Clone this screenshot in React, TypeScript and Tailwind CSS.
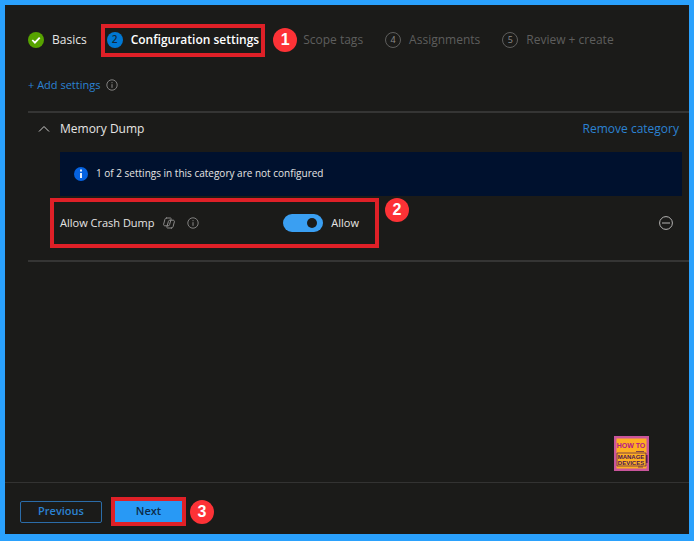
import type { ReactNode } from "react";

function CalloutBadge({ children }: { children: ReactNode }) {
  return (
    <span className="flex size-6 shrink-0 items-center justify-center rounded-full bg-[#fd3236] font-['Liberation_Sans',sans-serif] text-base font-bold text-white">
      {children}
    </span>
  );
}

function InfoIcon() {
  return (
    <svg className="size-3 shrink-0" viewBox="0 0 12 12" fill="none" stroke="#8c8b8a" aria-hidden="true">
      <circle cx="6" cy="6" r="5.2" strokeWidth="0.9" />
      <path d="M6 5.2v3.6M6 3.2v1" strokeWidth="1" />
    </svg>
  );
}

function CopilotIcon() {
  return (
    <svg className="size-3 shrink-0" viewBox="0 0 12 12" fill="none" stroke="#8c8b8a" strokeLinejoin="round" strokeLinecap="round" aria-hidden="true">
      <path d="M3.600 1h3.700c.8 0 1 .5.8 1.200L6.600 7.600c-.2.800-.6 1.200-1.400 1.200H2C.9 8.800.4 8.100.7 7l1.200-4.600C2.100 1.500 2.700 1 3.600 1z" />
      <path d="M8.400 11H4.700c-.8 0-1-.5-.8-1.200l1.500-5.400c.2-.8.6-1.200 1.400-1.200H10c1.100 0 1.600.7 1.300 1.800l-1.200 4.600c-.2.900-.8 1.400-1.700 1.400z" />
    </svg>
  );
}

function SiteLogo() {
  return (
    <svg className="size-[35px]" viewBox="0 0 35 35" role="img" aria-label="How to manage devices">
      <rect width="35" height="35" fill="#c9559b" />
      <rect x="2.500" y="2.500" width="30" height="30" fill="#fdaf22" />
      <g fontFamily="'Liberation Sans', sans-serif" fontWeight="700" textAnchor="middle">
        <text x="17" y="12" fontSize="7" fill="#b5168a">HOW TO</text>
        <text x="17" y="23" fontSize="6" fill="#4a1455">MANAGE</text>
        <text x="17" y="29" fontSize="6" fill="#4a1455">DEVICES</text>
      </g>
      <path d="M22 15.500h8M3 17h29v13H3zM24 31h5" fill="none" stroke="#4a1455" strokeWidth="0.7" />
      <path d="M32.800 19v8" stroke="#4a1455" strokeWidth="1.400" />
    </svg>
  );
}

export default function App() {
  return (
    <div className="flex min-h-screen flex-col border-[5px] border-b-[7px] border-[#2aa1fd] bg-[#1b1b19] font-['Open_Sans','Noto_Sans',sans-serif] text-xs text-[#e6e5e4]">
      <main className="flex flex-1 flex-col pl-[23px]">
        <nav className="mt-3.5 flex h-[42px] items-center">
          <a href="#basics" className="flex items-center gap-2">
            <svg className="size-4" viewBox="0 0 16 16" aria-hidden="true">
              <circle cx="8" cy="8" r="8" fill="#57a300" />
              <path d="M4.300 8l2.600 2.700 4.800-5" fill="none" stroke="#fff" strokeWidth="1.800" />
            </svg>
            Basics
          </a>
          <a href="#configuration" aria-current="step" className="ml-3.5 flex h-[33px] items-center gap-2 border-4 border-[#df2027] px-0.5 font-semibold text-white">
            <span className="flex size-4 items-center justify-center rounded-full bg-[#0078d4] text-[10px] text-[#10283c]">2</span>
            Configuration settings
          </a>
          <span className="ml-2 flex"><CalloutBadge>1</CalloutBadge></span>
          <a href="#scope" className="ml-1.5 text-[#5e5e5d]">Scope tags</a>
          <a href="#assignments" className="ml-[22px] flex items-center gap-2 text-[#5e5e5d]">
            <span className="flex size-4 items-center justify-center rounded-full border border-[#5e5e5d] text-[9px] text-[#8c8c8b]">4</span>
            Assignments
          </a>
          <a href="#review" className="ml-[22px] flex items-center gap-2 text-[#5e5e5d]">
            <span className="flex size-4 items-center justify-center rounded-full border border-[#5e5e5d] text-[9px] text-[#8c8c8b]">5</span>
            Review + create
          </a>
        </nav>

        <div className="mt-4 flex h-4 items-center gap-1.5 text-[11px]">
          <button type="button" className="text-[#2b82d2]">+ Add settings</button>
          <InfoIcon />
        </div>

        <section className="mt-[18px] border-y-2 border-[#353534] pb-3">
          <div className="flex h-8 items-center pr-2.5">
            <button type="button" aria-label="Collapse category" className="ml-2.5">
              <svg className="size-3" viewBox="0 0 12 12" fill="none" stroke="#cfcecd" aria-hidden="true">
                <path d="M1 8.500l5-5 5 5" />
              </svg>
            </button>
            <h2 className="ml-2.5">Memory Dump</h2>
            <button type="button" className="ml-auto text-[#2b82d2]">Remove category</button>
          </div>

          <div className="mt-[7px] mr-[7px] ml-8 flex h-11 items-center gap-2 bg-[#00112e] px-3.5 text-[10px]">
            <svg className="size-3.5" viewBox="0 0 14 14" aria-hidden="true">
              <circle cx="7" cy="7" r="7" fill="#0562e0" />
              <path d="M7 6v5M7 2.600v2" stroke="#fff" strokeWidth="1.800" />
            </svg>
            1 of 2 settings in this category are not configured
          </div>

          <div className="mt-0.5 mr-4 ml-[22px] flex items-start text-[11px]">
            <div className="flex h-[50px] w-[329px] items-center border-4 border-[#df2027] pl-1.5">
              <label htmlFor="crash-dump">Allow Crash Dump</label>
              <span className="ml-2 flex gap-3">
                <CopilotIcon />
                <InfoIcon />
              </span>
              <span className="mr-4 ml-auto flex items-center gap-2">
                <input
                  id="crash-dump"
                  type="checkbox"
                  role="switch"
                  defaultChecked
                  className="flex h-[18px] w-10 appearance-none items-center rounded-full bg-[#3a9ff2] px-1.5 before:size-2.5 before:rounded-full before:bg-[#1b1b19] checked:before:ml-auto"
                />
                <span>Allow</span>
              </span>
            </div>
            <span className="ml-1.5"><CalloutBadge>2</CalloutBadge></span>
            <button type="button" aria-label="Remove setting" className="ml-auto self-center">
              <svg className="size-3.5" viewBox="0 0 14 14" fill="none" stroke="#b5b4b3" aria-hidden="true">
                <circle cx="7" cy="7" r="6.400" />
                <path d="M3 7h8" />
              </svg>
            </button>
          </div>
        </section>

        <div className="mt-auto mr-10 mb-[11px] self-end">
          <SiteLogo />
        </div>
      </main>

      <footer className="flex h-[52px] items-center border-t border-[#333332] pt-2 pb-0.5 pl-[15px] text-[11px] font-semibold">
        <button type="button" className="h-[22px] w-[82px] rounded-xs border border-[#2b6ca8] text-[#2b82d2]">Previous</button>
        <div className="ml-[9px] border-4 border-[#df2027]">
          <button type="button" className="block h-[21px] w-[67px] bg-[#2899f5] text-[#0c2c48]">Next</button>
        </div>
        <span className="ml-1"><CalloutBadge>3</CalloutBadge></span>
      </footer>
    </div>
  );
}
